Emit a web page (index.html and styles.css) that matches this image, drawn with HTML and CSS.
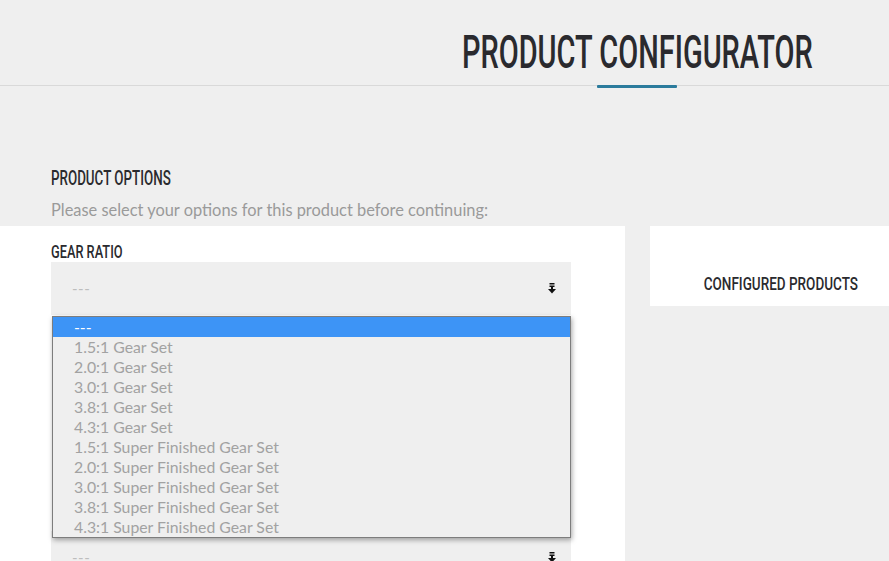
FILE: index.html
```html
<!DOCTYPE html>
<html lang="en">
<head>
<meta charset="utf-8">
<title>Product Configurator</title>
<link rel="stylesheet" href="styles.css">
</head>
<body>
<header class="site-header">
  <h1 class="page-title"><span class="condensed">PRODUCT CONFIGURATOR</span></h1>
  <span class="title-accent"></span>
</header>

<section class="intro">
  <h2 class="section-title"><span class="condensed">PRODUCT OPTIONS</span></h2>
  <p class="intro-text">Please select your options for this product before continuing:</p>
</section>

<div class="columns">
  <div class="options-panel">
    <div class="field">
      <label class="field-label"><span class="condensed">GEAR RATIO</span></label>
      <div class="select is-open">
        <span class="select-value">---</span>
        <svg class="select-arrow" width="8" height="11" viewBox="0 0 8 11">
          <rect x="1.5" y="0" width="5" height="1.5" fill="#111"/>
          <rect x="1.5" y="2.5" width="5" height="1.5" fill="#111"/>
          <rect x="3" y="4" width="2" height="2.5" fill="#111"/>
          <polygon points="0,6 8,6 4,10.5" fill="#111"/>
        </svg>
        <ul class="select-menu">
          <li class="option selected">---</li>
          <li class="option">1.5:1 Gear Set</li>
          <li class="option">2.0:1 Gear Set</li>
          <li class="option">3.0:1 Gear Set</li>
          <li class="option">3.8:1 Gear Set</li>
          <li class="option">4.3:1 Gear Set</li>
          <li class="option">1.5:1 Super Finished Gear Set</li>
          <li class="option">2.0:1 Super Finished Gear Set</li>
          <li class="option">3.0:1 Super Finished Gear Set</li>
          <li class="option">3.8:1 Super Finished Gear Set</li>
          <li class="option">4.3:1 Super Finished Gear Set</li>
        </ul>
      </div>
    </div>
    <div class="field">
      <div class="select">
        <span class="select-value">---</span>
        <svg class="select-arrow" width="8" height="11" viewBox="0 0 8 11">
          <rect x="1.5" y="0" width="5" height="1.5" fill="#111"/>
          <rect x="1.5" y="2.5" width="5" height="1.5" fill="#111"/>
          <rect x="3" y="4" width="2" height="2.5" fill="#111"/>
          <polygon points="0,6 8,6 4,10.5" fill="#111"/>
        </svg>
      </div>
    </div>
  </div>

  <aside class="summary-panel">
    <h3 class="summary-title"><span class="condensed">CONFIGURED PRODUCTS</span></h3>
  </aside>
</div>
</body>
</html>
```

FILE: styles.css
```css
html, body {
  margin: 0;
  padding: 0;
  height: 100%;
  overflow: hidden;
}

body {
  background: #efefef;
  font-family: Lato, "Open Sans", sans-serif;
  color: #2b2b2b;
}

/* narrow display headings: a medium grotesque squeezed horizontally */
.condensed {
  display: inline-block;
  white-space: nowrap;
  font-family: Roboto, "Liberation Sans", Arial, sans-serif;
  font-weight: 500;
  color: #2a2a2e;
  transform: scaleX(var(--squeeze, 0.65));
  transform-origin: left center;
}

/* ---------- header ---------- */
.site-header {
  position: relative;
  height: 86px;
  border-bottom: 1px solid #d9d9d9;
  padding: 28px 0 0 462px;
  box-sizing: border-box;
}

.page-title {
  margin: 0;
  font-size: 46px;
  line-height: 46px;
  font-weight: normal;
  white-space: nowrap;
}

.page-title .condensed {
  --squeeze: 0.63;
}

.title-accent {
  position: absolute;
  left: 597px;
  top: 85px;
  width: 80px;
  height: 3px;
  border-radius: 1px;
  background: #2b7b9c;
}

/* ---------- intro ---------- */
.intro {
  padding: 81px 51px 6px;
}

.section-title {
  margin: 0;
  font-size: 20px;
  line-height: 20px;
  font-weight: normal;
}

.section-title .condensed {
  --squeeze: 0.668;
}

.intro-text {
  margin: 12px 0 0;
  font-size: 16.4px;
  line-height: 20px;
  color: #9a9a9a;
}

/* ---------- columns ---------- */
.columns {
  display: flex;
  align-items: flex-start;
  gap: 25px;
}

.options-panel {
  flex: 0 0 625px;
  box-sizing: border-box;
  min-height: 400px;
  background: #fff;
  padding: 16px 54px 0 51px;
}

.field-label {
  display: block;
  font-size: 18px;
  line-height: 18px;
  margin-bottom: 1px;
}

.field-label .condensed {
  --squeeze: 0.71;
}

.field + .field {
  margin-top: 216px;
}

.select {
  position: relative;
  display: flex;
  align-items: center;
  justify-content: space-between;
  height: 53px;
  padding: 0 15px 0 21px;
  background: #efefef;
}

.select-value {
  font-size: 15px;
  color: #bdbdbd;
  letter-spacing: 0.5px;
  margin-top: -1px;
}

.select-arrow {
  display: block;
  margin-top: -1px;
}

/* open option list */
.select-menu {
  position: absolute;
  top: 100%;
  left: 1px;
  right: 0;
  margin: 1px 0 0;
  padding: 0;
  list-style: none;
  background: #efefef;
  border: 1px solid #7d7d7d;
  box-shadow: 1px 2px 5px rgba(0, 0, 0, 0.35);
  z-index: 2;
}

.option {
  height: 20px;
  line-height: 20px;
  padding-left: 21px;
  font-size: 15.8px;
  color: #a2a2a2;
  white-space: nowrap;
}

.option.selected {
  background: #3d94f6;
  color: #fff;
}

/* ---------- summary ---------- */
.summary-panel {
  flex: 1 1 auto;
  min-width: 0;
  box-sizing: border-box;
  background: #fff;
  padding: 48px 0 13px 22px;
  text-align: center;
}

.summary-title {
  margin: 0;
  font-size: 18px;
  line-height: 18px;
  font-weight: normal;
}

.summary-title .condensed {
  --squeeze: 0.75;
  transform-origin: center center;
}
```
